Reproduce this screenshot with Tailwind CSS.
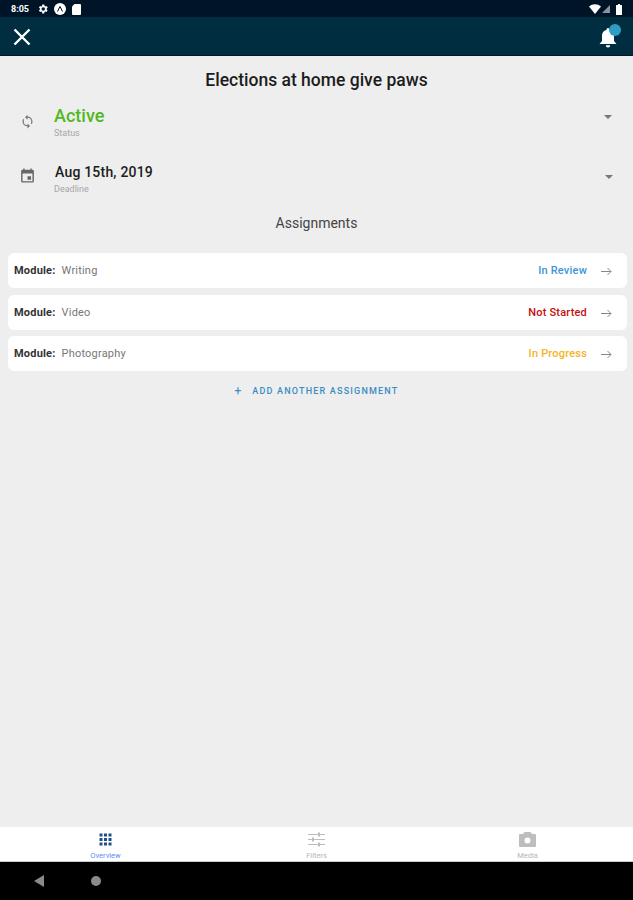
<!DOCTYPE html>
<html lang="en">

<head>
  <meta charset="UTF-8">
  <meta name="viewport" content="width=device-width, initial-scale=1.0">
  <title>Elections at home give paws</title>
  <script src="https://cdn.jsdelivr.net/npm/@tailwindcss/browser@4"></script>
</head>

<body class="bg-[#eeeeee] font-['Roboto',sans-serif]">
  <div class="w-[633px] h-[900px] flex flex-col overflow-hidden">

    <!-- status bar -->
    <div class="h-[17px] pt-[1px] bg-[#001428] flex items-center justify-between pl-[11px] pr-[11px] text-white">
      <div class="flex items-center">
        <span class="text-[9px] font-bold leading-none w-[26px]">8:05</span>
        <svg class="w-[12px] h-[12px]" viewBox="0 0 24 24" fill="#fff"><path d="M19.4 13a7.5 7.5 0 0 0 0-2l2.1-1.6-2-3.5-2.5 1a7.5 7.5 0 0 0-1.7-1L14.500 3h-4l-.4 2.900a7.500 7.500 0 0 0-1.700 1l-2.500-1-2 3.500L6 11a7.500 7.500 0 0 0 0 2l-2.100 1.600 2 3.500 2.500-1a7.500 7.500 0 0 0 1.700 1l.4 2.900h4l.4-2.900a7.500 7.500 0 0 0 1.700-1l2.500 1 2-3.500zM12.500 15.500a3.500 3.500 0 1 1 0-7 3.500 3.500 0 0 1 0 7z"/></svg>
        <svg class="w-[12px] h-[12px] ml-[5px]" viewBox="0 0 24 24"><circle cx="12" cy="12" r="12" fill="#fff"/><path d="M7 17l5-10 5 10" fill="none" stroke="#001428" stroke-width="2"/></svg>
        <svg class="w-[9px] h-[11px] ml-[6px]" viewBox="0 0 18 22" fill="#fff"><path d="M5 0h11a2 2 0 0 1 2 2v18a2 2 0 0 1-2 2H2a2 2 0 0 1-2-2V5z"/></svg>
      </div>
      <div class="flex items-center">
        <svg class="w-[12px] h-[10px]" viewBox="0 0 24 20" fill="#fff"><path d="M0 5a18 18 0 0 1 24 0L12 20z"/></svg>
        <svg class="w-[8px] h-[8px] ml-[1px]" viewBox="0 0 16 16" fill="#8a929c"><path d="M16 0v16H0z"/></svg>
        <svg class="w-[6px] h-[11px] ml-[6px]" viewBox="0 0 12 22" fill="#fff"><path d="M4 0h4v2h3a1 1 0 0 1 1 1v18a1 1 0 0 1-1 1H1a1 1 0 0 1-1-1V3a1 1 0 0 1 1-1h3z"/></svg>
      </div>
    </div>

    <!-- app bar -->
    <div class="h-[39px] pt-[1px] bg-[#002d40] flex items-center justify-between pl-[13px] pr-[16px] border-b-[1px] border-[#001a26]">
      <svg class="w-[18px] h-[18px]" viewBox="0 0 18 18" fill="none" stroke="#fff" stroke-width="2.400"><path d="M1.500 1.500l15 15M16.500 1.500l-15 15"/></svg>
      <div class="relative w-[18px] h-[22px]">
        <svg class="absolute left-0 top-[2px] w-[18px] h-[20px]" viewBox="0 0 18 20" fill="#fff"><path d="M9 0a1.500 1.500 0 0 1 1.500 1.500v.6A6 6 0 0 1 15 8v5l2.500 3H.500L3 13V8a6 6 0 0 1 4.500-5.900v-.6A1.500 1.500 0 0 1 9 0zM6.800 17.300h4.400a2.200 2.200 0 0 1-4.400 0z"/></svg>
        <span class="absolute left-[10px] top-[-2px] w-[12px] h-[12px] rounded-full bg-[#2f9cc4]"></span>
      </div>
    </div>

    <!-- main -->
    <main class="flex-1 flex flex-col">
      <h1 class="text-[17.5px] leading-[20px] font-medium text-[#1c1c1c] text-center mt-[14px]">Elections at home give paws</h1>

      <div class="flex items-start mt-[15px] h-[50px] pl-[20px] pr-[21px]">
        <svg class="w-[15px] h-[15px] mt-[9px] mr-[19px]" viewBox="0 0 24 24" fill="#777"><path d="M12 4V1L8 5l4 4V6a6 6 0 0 1 6 6c0 1-.25 1.970-.7 2.800l1.460 1.460A7.930 7.930 0 0 0 20 12a8 8 0 0 0-8-8zm0 14a6 6 0 0 1-6-6c0-1 .25-1.970.7-2.800L5.240 7.740A7.930 7.930 0 0 0 4 12a8 8 0 0 0 8 8v3l4-4-4-4z"/></svg>
        <div class="flex-1">
          <div class="text-[18px] leading-[21px] font-medium text-[#53b81f]">Active</div>
          <div class="text-[9px] leading-[12px] text-[#a6a6a6] mt-[1px]">Status</div>
        </div>
        <span class="w-0 h-0 mt-[10px] border-x-[4px] border-x-transparent border-t-[4px] border-t-[#777]"></span>
      </div>

      <div class="flex items-start mt-[9px] h-[40px] pl-[19px] pr-[20px]">
        <svg class="w-[17px] h-[17px] mt-[3px] mr-[18px]" viewBox="0 0 24 24" fill="#666"><path d="M17 13h-5v5h5zM16 2v2H8V2H6v2H5a2 2 0 0 0-2 2v14a2 2 0 0 0 2 2h14a2 2 0 0 0 2-2V6a2 2 0 0 0-2-2h-1V2zm3 18H5V9h14z"/></svg>
        <div class="flex-1">
          <div class="text-[14px] leading-[16px] font-medium text-[#1c1c1c] tracking-[0.2px] pl-[1px]">Aug 15th, 2019</div>
          <div class="text-[9px] leading-[12px] text-[#a6a6a6] mt-[3px]">Deadline</div>
        </div>
        <span class="w-0 h-0 mt-[11px] border-x-[4px] border-x-transparent border-t-[4px] border-t-[#777]"></span>
      </div>

      <h2 class="text-[14px] leading-[18px] text-[#444] text-center mt-[10px]">Assignments</h2>

      <div class="flex flex-col gap-[6.5px] ml-[8px] mr-[6px] mt-[21px]">
        <div class="h-[35px] pt-[2px] bg-white rounded-[6px] flex items-center pl-[6px] pr-[15px] text-[11px] tracking-[0.2px]">
          <span class="font-bold text-[#333] mr-[6px]">Module:</span>
          <span class="text-[#777] flex-1">Writing</span>
          <span class="font-medium text-[#3d94d6] mr-[14px]">In Review</span>
          <svg class="w-[11px] h-[9px]" viewBox="0 0 11 9" fill="none" stroke="#888" stroke-width="1"><path d="M0 4.500h10M6.500 1l3.500 3.500L6.500 8"/></svg>
        </div>
        <div class="h-[35px] pt-[2px] bg-white rounded-[6px] flex items-center pl-[6px] pr-[15px] text-[11px] tracking-[0.2px]">
          <span class="font-bold text-[#333] mr-[6px]">Module:</span>
          <span class="text-[#777] flex-1">Video</span>
          <span class="font-medium text-[#c0100c] mr-[14px]">Not Started</span>
          <svg class="w-[11px] h-[9px]" viewBox="0 0 11 9" fill="none" stroke="#888" stroke-width="1"><path d="M0 4.500h10M6.500 1l3.500 3.500L6.500 8"/></svg>
        </div>
        <div class="h-[35px] pt-[2px] bg-white rounded-[6px] flex items-center pl-[6px] pr-[15px] text-[11px] tracking-[0.2px]">
          <span class="font-bold text-[#333] mr-[6px]">Module:</span>
          <span class="text-[#777] flex-1">Photography</span>
          <span class="font-medium text-[#f5b324] mr-[14px]">In Progress</span>
          <svg class="w-[11px] h-[9px]" viewBox="0 0 11 9" fill="none" stroke="#888" stroke-width="1"><path d="M0 4.500h10M6.500 1l3.500 3.500L6.500 8"/></svg>
        </div>
      </div>

      <div class="flex items-center justify-center mt-[13px] text-[#3a8cc4]">
        <span class="text-[12px] leading-[14px] mr-[11px]">+</span>
        <span class="text-[9px] leading-[14px] font-medium tracking-[1.200px]">ADD ANOTHER ASSIGNMENT</span>
      </div>
    </main>

    <!-- bottom tabs -->
    <nav class="h-[35px] bg-white grid grid-cols-3 border-b-[1px] border-[#ccc]">
      <div class="flex flex-col items-center pt-[6px]">
        <svg class="w-[13px] h-[13px]" viewBox="0 0 13 13" fill="#1f4f86"><rect x="0.500" y="0.500" width="3" height="3"/><rect x="5" y="0.500" width="3" height="3"/><rect x="9.500" y="0.500" width="3" height="3"/><rect x="0.500" y="5" width="3" height="3"/><rect x="5" y="5" width="3" height="3"/><rect x="9.500" y="5" width="3" height="3"/><rect x="0.500" y="9.500" width="3" height="3"/><rect x="5" y="9.500" width="3" height="3"/><rect x="9.500" y="9.500" width="3" height="3"/></svg>
        <span class="text-[7.5px] leading-[9px] mt-[5px] text-[#5b8def]">Overview</span>
      </div>
      <div class="flex flex-col items-center pt-[5px]">
        <svg class="w-[17px] h-[15px]" viewBox="0 0 17 15" fill="none" stroke="#bdbdbd" stroke-width="1"><path d="M0 2.500h17M0 7.500h17M0 12.500h17"/><path d="M11 .5v4M5 5.500v4M11 10.500v4" stroke-width="2"/></svg>
        <span class="text-[7.5px] leading-[9px] mt-[4px] text-[#b5b5b5]">Filters</span>
      </div>
      <div class="flex flex-col items-center pt-[5px]">
        <svg class="w-[17px] h-[15px]" viewBox="0 0 17 15" fill="#bdbdbd"><path d="M5.500 0h6L13 2h3a1 1 0 0 1 1 1v11a1 1 0 0 1-1 1H1a1 1 0 0 1-1-1V3a1 1 0 0 1 1-1h3zM8.500 11.500a3 3 0 1 0 0-6 3 3 0 0 0 0 6z"/></svg>
        <span class="text-[7.5px] leading-[9px] mt-[4px] text-[#b5b5b5]">Media</span>
      </div>
    </nav>

    <!-- android nav -->
    <div class="h-[38px] bg-black flex items-center pl-[34px]">
      <span class="w-0 h-0 border-y-[6px] border-y-transparent border-r-[10px] border-r-[#8a8a8a]"></span>
      <span class="w-[10px] h-[10px] rounded-full bg-[#8a8a8a] ml-[47px]"></span>
    </div>
  </div>
</body>

</html>
